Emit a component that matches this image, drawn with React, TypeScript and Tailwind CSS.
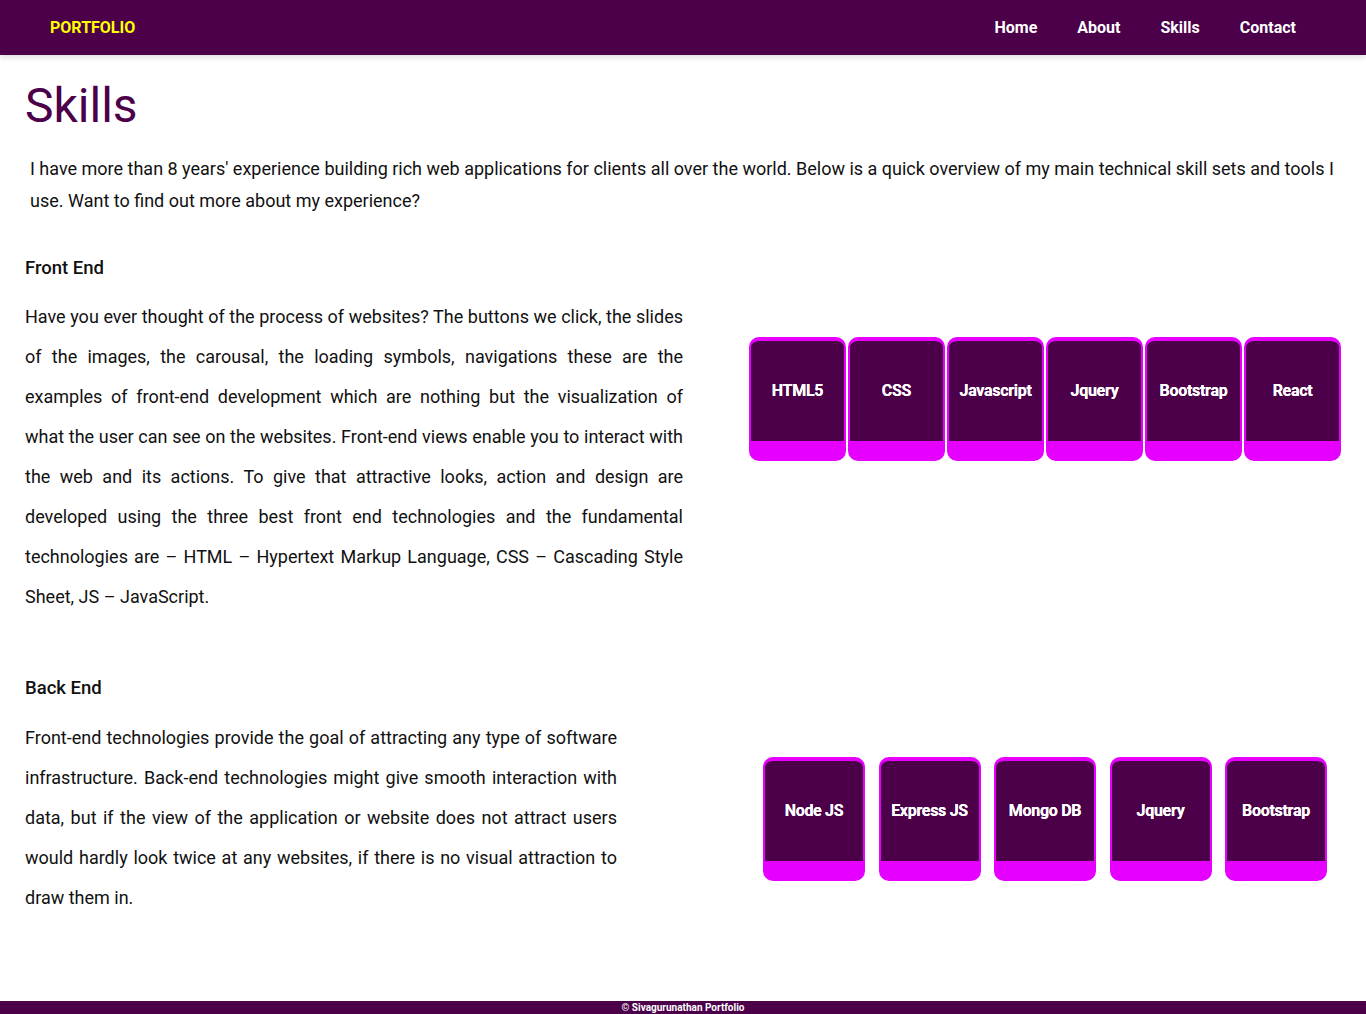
const frontEnd = ["HTML5", "CSS", "Javascript", "Jquery", "Bootstrap", "React"];
const backEnd = ["Node JS", "Express JS", "Mongo DB", "Jquery", "Bootstrap"];

function SkillCard({ name, wide }: { name: string; wide?: boolean }) {
  return (
    <div
      className={`${wide ? "w-[102px]" : "w-[97px]"} h-[124px] shrink-0 rounded-[10px] border-2 border-t-4 border-b-[20px] border-[#e600ff] bg-[#4b0049] flex items-center justify-center text-white text-base font-bold tracking-[-0.3px] [text-shadow:0_0_0.6px_#fff]`}
    >
      {name}
    </div>
  );
}

export default function App() {
  return (
    <div className="min-h-screen flex flex-col bg-white font-['Roboto',_'Liberation_Sans',_sans-serif] text-[#111]">
      <nav className="h-[55px] bg-[#4b0049] flex items-center pl-[50px] pr-[70px] shadow-[0_2px_6px_rgba(0,0,0,0.15)] relative z-10">
        <span className="text-[#ffff00] font-bold text-base">PORTFOLIO</span>
        <ul className="ml-auto flex items-center gap-10 text-white font-bold text-base">
          <li>Home</li>
          <li>About</li>
          <li>Skills</li>
          <li>Contact</li>
        </ul>
      </nav>

      <main className="px-[25px] pt-[22px]">
        <h1 className="text-[48px] leading-[1.2] text-[#4b0049] font-normal">Skills</h1>
        <p className="mt-[18px] px-[5px] text-[18px] leading-[32px]">
          I have more than 8 years' experience building rich web applications for clients all over the world. Below is a quick overview of my main technical skill sets and tools I use. Want to find out more about my experience?
        </p>

        <h5 className="mt-[39px] text-[18.5px] leading-[24px] font-medium">Front End</h5>
        <div className="mt-[17px] flex items-start">
          <p className="w-[658px] text-[18px] leading-[40px] text-justify">
            Have you ever thought of the process of websites? The buttons we click, the slides of the images, the carousal, the loading symbols, navigations these are the examples of front-end development which are nothing but the visualization of what the user can see on the websites. Front-end views enable you to interact with the web and its actions. To give that attractive looks, action and design are developed using the three best front end technologies and the fundamental technologies are – HTML – Hypertext Markup Language, CSS – Cascading Style Sheet, JS – JavaScript.
          </p>
          <div className="ml-auto mt-[40px] flex gap-[2px]">
            {frontEnd.map((s) => (
              <SkillCard key={s} name={s} />
            ))}
          </div>
        </div>

        <h5 className="mt-[59px] text-[18.5px] leading-[24px] font-medium">Back End</h5>
        <div className="mt-[18px] flex items-start">
          <p className="w-[592px] text-[18px] leading-[40px] text-justify">
            Front-end technologies provide the goal of attracting any type of software infrastructure. Back-end technologies might give smooth interaction with data, but if the view of the application or website does not attract users would hardly look twice at any websites, if there is no visual attraction to draw them in.
          </p>
          <div className="ml-auto mr-[14px] mt-[39px] flex gap-[13.5px]">
            {backEnd.map((s) => (
              <SkillCard key={s} name={s} wide />
            ))}
          </div>
        </div>
      </main>

      <footer className="mt-auto h-[13px] bg-[#4b0049] text-white text-[10px] font-bold leading-[13px] text-center">
        © Sivagurunathan Portfolio
      </footer>
    </div>
  );
}
